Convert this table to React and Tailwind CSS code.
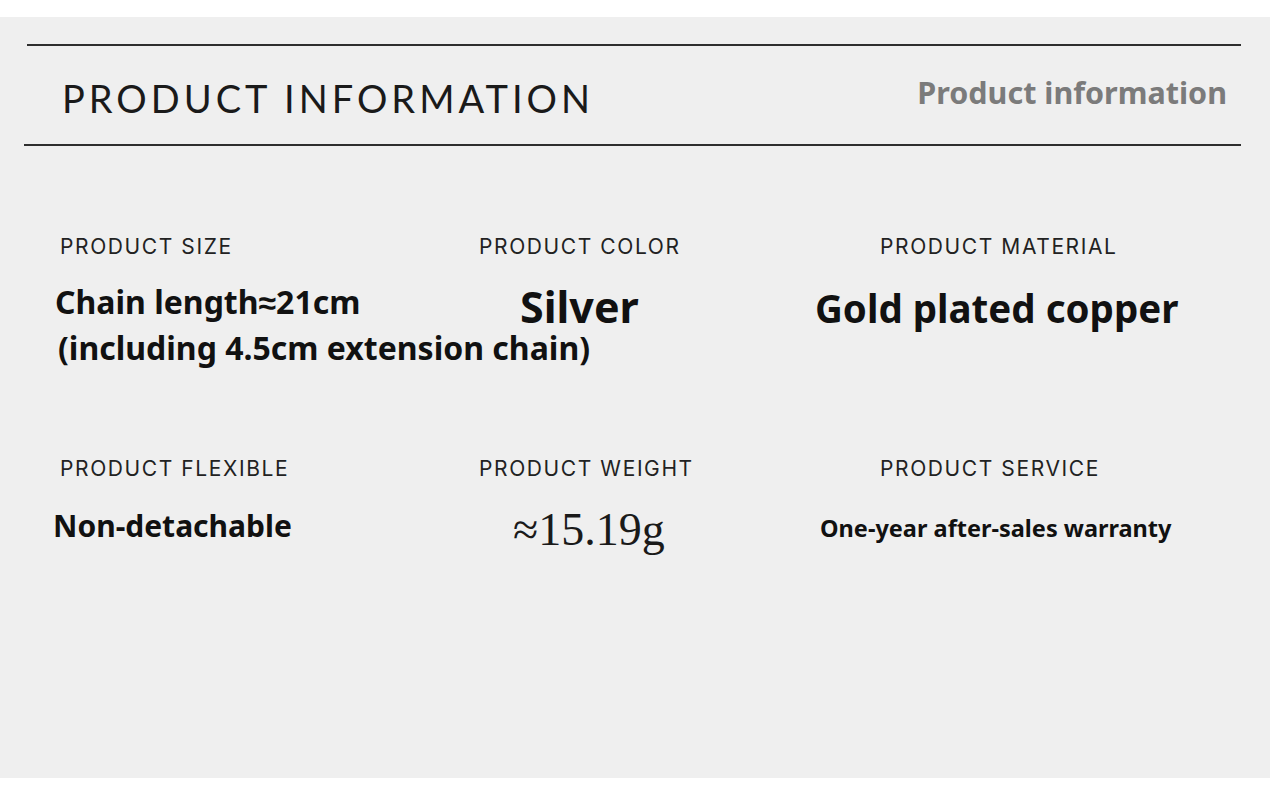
import React from 'react';

const bold = "font-['Noto_Sans',sans-serif] font-bold text-[#111] whitespace-nowrap";

const items = [
  {
    label: 'PRODUCT SIZE',
    value: (
      <div className={`${bold} text-[32px] leading-[46px] -ml-[5px] mt-[1px]`}>
        <div>Chain length≈21cm</div>
        <div className="ml-[3px]">(including 4.5cm extension chain)</div>
      </div>
    ),
  },
  {
    label: 'PRODUCT COLOR',
    value: <div className={`${bold} text-[43px] leading-[51px] ml-[41px] mt-[3px]`}>Silver</div>,
  },
  {
    label: 'PRODUCT MATERIAL',
    value: <div className={`${bold} text-[38.5px] leading-[54px] -ml-[65px] mt-[3px]`}>Gold plated copper</div>,
  },
  {
    label: 'PRODUCT FLEXIBLE',
    value: <div className={`${bold} text-[30px] leading-[47px] -ml-[7px] mt-[2px]`}>Non-detachable</div>,
  },
  {
    label: 'PRODUCT WEIGHT',
    value: (
      <div className="font-['Liberation_Serif',serif] text-[46px] leading-[64px] text-[#1a1a1a] ml-[34px] -mt-[2px] whitespace-nowrap">
        ≈15.19g
      </div>
    ),
  },
  {
    label: 'PRODUCT SERVICE',
    value: <div className={`${bold} text-[23.5px] leading-[52px] -ml-[60px] mt-[2px]`}>One-year after-sales warranty</div>,
  },
];

const Cell = ({ item }) => (
  <div className="flex flex-col items-start">
    <div className="font-['Inter',sans-serif] text-[21px] leading-[24px] tracking-[1.6px] text-[#222] whitespace-nowrap">
      {item.label}
    </div>
    <div className="mt-[19px]">{item.value}</div>
  </div>
);

const App = () => {
  return (
    <div className="bg-white w-[1270px] h-[800px] pt-[17px]">
      <div className="bg-[#efefef] h-[761px]">
        {/* Header */}
        <div className="pt-[27px]">
          <div className="ml-[27px] w-[1214px] h-[2px] bg-[#2e2e2e]" />
          <div className="flex items-center justify-between h-[98px] pl-[62px] pr-[43px]">
            <h1 className="font-['Lato',sans-serif] font-normal text-[38px] tracking-[4px] text-[#1a1a1a] mt-[6px]">
              PRODUCT INFORMATION
            </h1>
            <span className="font-['Noto_Sans',sans-serif] font-bold text-[30.5px] text-[#7b7b7b] -mt-[4px]">
              Product information
            </span>
          </div>
          <div className="ml-[24px] w-[1217px] h-[2px] bg-[#2e2e2e]" />
        </div>

        {/* Details */}
        <div className="grid grid-cols-[419px_401px_330px] gap-y-[86px] pl-[60px] pt-[89px]">
          {items.map((item) => (
            <Cell key={item.label} item={item} />
          ))}
        </div>
      </div>
    </div>
  );
};

export default App;
